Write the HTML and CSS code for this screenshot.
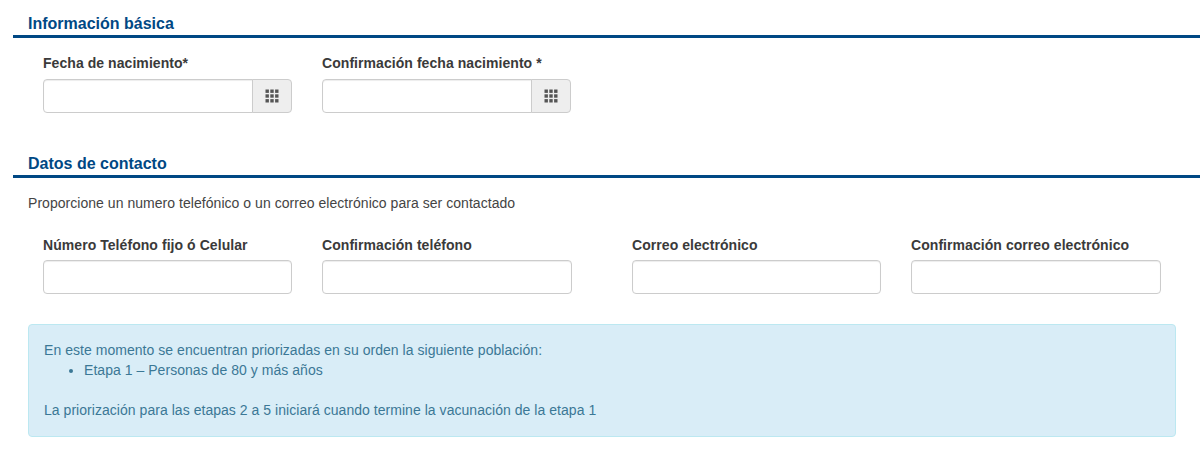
FILE: index.html
```html
<!DOCTYPE html>
<html lang="es">
<head>
<meta charset="utf-8">
<title>Formulario</title>
<link rel="stylesheet" href="styles.css">
</head>
<body>
<main class="page">
  <section class="section section-basic">
    <h2 class="section-title">Información básica</h2>
    <div class="fields">
      <div class="field">
        <label class="label">Fecha de nacimiento*</label>
        <div class="input-group">
          <input class="input input-joined" type="text">
          <span class="addon">
            <svg class="icon" width="14" height="14" viewBox="0 0 14 14" aria-hidden="true"><g fill="#555"><rect x="0.5" y="0.5" width="3.4" height="3.4"/><rect x="5.3" y="0.5" width="3.4" height="3.4"/><rect x="10.1" y="0.5" width="3.4" height="3.4"/><rect x="0.5" y="5.3" width="3.4" height="3.4"/><rect x="5.3" y="5.3" width="3.4" height="3.4"/><rect x="10.1" y="5.3" width="3.4" height="3.4"/><rect x="0.5" y="10.1" width="3.4" height="3.4"/><rect x="5.3" y="10.1" width="3.4" height="3.4"/><rect x="10.1" y="10.1" width="3.4" height="3.4"/></g></svg>
          </span>
        </div>
      </div>
      <div class="field field-gap">
        <label class="label">Confirmación fecha nacimiento *</label>
        <div class="input-group">
          <input class="input input-joined" type="text">
          <span class="addon">
            <svg class="icon" width="14" height="14" viewBox="0 0 14 14" aria-hidden="true"><g fill="#555"><rect x="0.5" y="0.5" width="3.4" height="3.4"/><rect x="5.3" y="0.5" width="3.4" height="3.4"/><rect x="10.1" y="0.5" width="3.4" height="3.4"/><rect x="0.5" y="5.3" width="3.4" height="3.4"/><rect x="5.3" y="5.3" width="3.4" height="3.4"/><rect x="10.1" y="5.3" width="3.4" height="3.4"/><rect x="0.5" y="10.1" width="3.4" height="3.4"/><rect x="5.3" y="10.1" width="3.4" height="3.4"/><rect x="10.1" y="10.1" width="3.4" height="3.4"/></g></svg>
          </span>
        </div>
      </div>
    </div>
  </section>
  <section class="section section-contact">
    <h2 class="section-title">Datos de contacto</h2>
    <p class="intro">Proporcione un numero telefónico o un correo electrónico para ser contactado</p>
    <div class="fields">
      <div class="field">
        <label class="label">Número Teléfono fijo ó Celular</label>
        <input class="input" type="text">
      </div>
      <div class="field field-gap field-wide">
        <label class="label">Confirmación teléfono</label>
        <input class="input" type="text">
      </div>
      <div class="field field-pair">
        <label class="label">Correo electrónico</label>
        <input class="input" type="text">
      </div>
      <div class="field field-gap field-wide">
        <label class="label">Confirmación correo electrónico</label>
        <input class="input" type="text">
      </div>
    </div>
  </section>
  <div class="alert">
    <div>En este momento se encuentran priorizadas en su orden la siguiente población:</div>
    <ul class="alert-list"><li>Etapa 1 – Personas de 80 y más años</li></ul>
    <div class="alert-last">La priorización para las etapas 2 a 5 iniciará cuando termine la vacunación de la etapa 1</div>
  </div>
</main>
</body>
</html>
```
FILE: styles.css
```css
* { box-sizing: border-box; }
html, body { margin: 0; padding: 0; }
body {
  height: 463px;
  overflow: hidden;
  background: #fff;
  font-family: "Liberation Sans", Arial, sans-serif;
  font-size: 14px;
  line-height: 20px;
  letter-spacing: 0.04px;
  color: #444;
}
.page { padding-top: 14px; padding-left: 13px; }
.section-title {
  margin: 0;
  padding-left: 15px;
  height: 24px;
  border-bottom: 3px solid #004884;
  font-size: 16px;
  line-height: 19px;
  font-weight: 700;
  letter-spacing: 0;
  color: #004884;
}
.fields { display: flex; padding-left: 30px; }
.section-basic .fields { padding-top: 15px; }
.section-basic .label { margin-bottom: 6px; }
.field { width: 249px; flex: none; }
.field-gap { margin-left: 30px; }
.field-wide { width: 250px; }
.field-pair { margin-left: 60px; }
.label {
  display: block;
  margin-bottom: 5px;
  font-size: 14px;
  line-height: 20px;
  font-weight: 700;
  letter-spacing: 0.06px;
  color: #3a3a3a;
}
.input-group { display: flex; }
.input {
  display: block;
  width: 100%;
  min-width: 0;
  height: 34px;
  margin: 0;
  padding: 6px 12px;
  background: #fff;
  border: 1px solid #ccc;
  border-radius: 4px;
  box-shadow: inset 0 1px 1px rgba(0,0,0,.075);
  outline: none;
}
.input-joined { flex: 1; border-radius: 4px 0 0 4px; }
.addon {
  flex: none;
  width: 40px;
  height: 34px;
  display: flex;
  align-items: center;
  justify-content: center;
  background: #eee;
  border: 1px solid #ccc;
  border-radius: 0 4px 4px 0;
  margin-left: -1px;
}
.section-contact { margin-top: 41px; }
.intro { margin: 15px 0 0; padding-left: 15px; }
.section-contact .fields { padding-top: 22px; }
.alert {
  width: 1148px;
  height: 113px;
  margin: 30px 0 0 15px;
  padding: 15px;
  background: #d9edf7;
  border: 1px solid #bce8f1;
  border-radius: 4px;
  color: #3b7896;
}
.alert-list { margin: 0; padding-left: 40px; }
.alert-last { margin-top: 20px; }
```
